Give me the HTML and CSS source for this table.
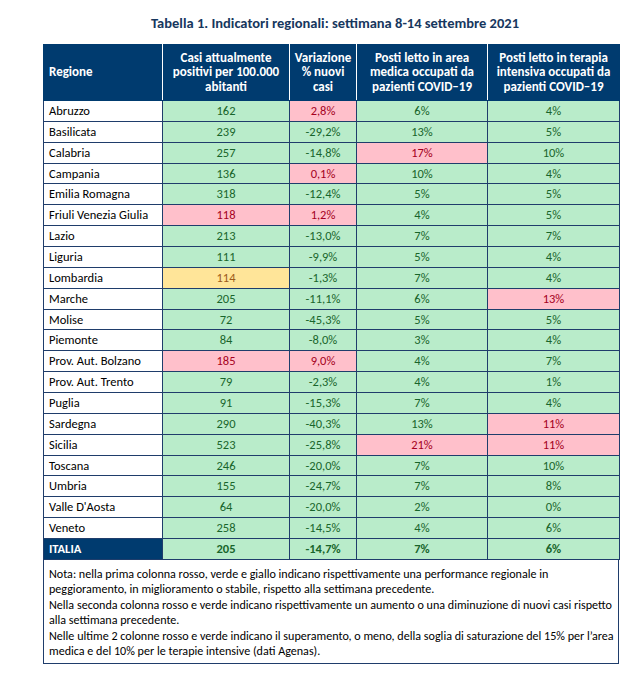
FILE: index.html
```html
<!DOCTYPE html>
<html lang="it">
<head>
<meta charset="utf-8">
<title>Tabella 1. Indicatori regionali</title>
<link rel="stylesheet" href="styles.css">
</head>
<body>
<div class="page">
  <h1 class="title">Tabella 1. Indicatori regionali: settimana 8-14 settembre 2021</h1>
  <table class="grid">
    <colgroup>
      <col class="c-reg"><col class="c-casi"><col class="c-var"><col class="c-med"><col class="c-int">
    </colgroup>
    <thead>
      <tr>
        <th class="h-reg">Regione</th>
        <th>Casi attualmente positivi per 100.000 abitanti</th>
        <th>Variazione % nuovi casi</th>
        <th>Posti letto in area medica occupati da pazienti COVID–19</th>
        <th>Posti letto in terapia intensiva occupati da pazienti COVID–19</th>
      </tr>
    </thead>
    <tbody>
      <tr><td class="reg">Abruzzo</td><td class="g">162</td><td class="r">2,8%</td><td class="g">6%</td><td class="g">4%</td></tr>
      <tr><td class="reg">Basilicata</td><td class="g">239</td><td class="g">-29,2%</td><td class="g">13%</td><td class="g">5%</td></tr>
      <tr><td class="reg">Calabria</td><td class="g">257</td><td class="g">-14,8%</td><td class="r">17%</td><td class="g">10%</td></tr>
      <tr><td class="reg">Campania</td><td class="g">136</td><td class="r">0,1%</td><td class="g">10%</td><td class="g">4%</td></tr>
      <tr><td class="reg">Emilia Romagna</td><td class="g">318</td><td class="g">-12,4%</td><td class="g">5%</td><td class="g">5%</td></tr>
      <tr><td class="reg">Friuli Venezia Giulia</td><td class="r">118</td><td class="r">1,2%</td><td class="g">4%</td><td class="g">5%</td></tr>
      <tr><td class="reg">Lazio</td><td class="g">213</td><td class="g">-13,0%</td><td class="g">7%</td><td class="g">7%</td></tr>
      <tr><td class="reg">Liguria</td><td class="g">111</td><td class="g">-9,9%</td><td class="g">5%</td><td class="g">4%</td></tr>
      <tr><td class="reg">Lombardia</td><td class="y">114</td><td class="g">-1,3%</td><td class="g">7%</td><td class="g">4%</td></tr>
      <tr><td class="reg">Marche</td><td class="g">205</td><td class="g">-11,1%</td><td class="g">6%</td><td class="r">13%</td></tr>
      <tr><td class="reg">Molise</td><td class="g">72</td><td class="g">-45,3%</td><td class="g">5%</td><td class="g">5%</td></tr>
      <tr><td class="reg">Piemonte</td><td class="g">84</td><td class="g">-8,0%</td><td class="g">3%</td><td class="g">4%</td></tr>
      <tr><td class="reg">Prov. Aut. Bolzano</td><td class="r">185</td><td class="r">9,0%</td><td class="g">4%</td><td class="g">7%</td></tr>
      <tr><td class="reg">Prov. Aut. Trento</td><td class="g">79</td><td class="g">-2,3%</td><td class="g">4%</td><td class="g">1%</td></tr>
      <tr><td class="reg">Puglia</td><td class="g">91</td><td class="g">-15,3%</td><td class="g">7%</td><td class="g">4%</td></tr>
      <tr><td class="reg">Sardegna</td><td class="g">290</td><td class="g">-40,3%</td><td class="g">13%</td><td class="r">11%</td></tr>
      <tr><td class="reg">Sicilia</td><td class="g">523</td><td class="g">-25,8%</td><td class="r">21%</td><td class="r">11%</td></tr>
      <tr><td class="reg">Toscana</td><td class="g">246</td><td class="g">-20,0%</td><td class="g">7%</td><td class="g">10%</td></tr>
      <tr><td class="reg">Umbria</td><td class="g">155</td><td class="g">-24,7%</td><td class="g">7%</td><td class="g">8%</td></tr>
      <tr><td class="reg">Valle D'Aosta</td><td class="g">64</td><td class="g">-20,0%</td><td class="g">2%</td><td class="g">0%</td></tr>
      <tr><td class="reg">Veneto</td><td class="g">258</td><td class="g">-14,5%</td><td class="g">4%</td><td class="g">6%</td></tr>
      <tr class="total"><td class="reg-total">ITALIA</td><td class="g">205</td><td class="g">-14,7%</td><td class="g">7%</td><td class="g">6%</td></tr>
    </tbody>
  </table>
  <div class="note">
    <p>Nota: nella prima colonna rosso, verde e giallo indicano rispettivamente una performance regionale in peggioramento, in miglioramento o stabile, rispetto alla settimana precedente.</p>
    <p>Nella seconda colonna rosso e verde indicano rispettivamente un aumento o una diminuzione di nuovi casi rispetto alla settimana precedente.</p>
    <p>Nelle ultime 2 colonne rosso e verde indicano il superamento, o meno, della soglia di saturazione del 15% per l’area medica e del 10% per le terapie intensive (dati Agenas).</p>
  </div>
</div>
</body>
</html>
```

FILE: styles.css
```css
html, body {
  margin: 0;
  padding: 0;
  background: #ffffff;
}

.page {
  width: 576px;
  margin-left: 43px;
  font-family: "Carlito", "Lato", "Noto Sans", sans-serif;
  color: #000;
}

.title {
  margin: 0;
  padding: 15px 0 0 8px;
  height: 30px;
  box-sizing: border-box;
  text-align: center;
  font-size: 14.5px;
  line-height: 16px;
  font-weight: 700;
  color: #17375e;
}

.grid {
  margin-top: 14px;
  width: 576px;
  border-collapse: collapse;
  table-layout: fixed;
  font-size: 12.5px;
}

.c-reg { width: 119px; }
.c-casi { width: 127px; }
.c-var { width: 67px; }
.c-med { width: 131px; }
.c-int { width: 132px; }

.grid th {
  background: #003b6f;
  color: #fff;
  font-weight: 700;
  font-size: 13px;
  line-height: 14.5px;
  height: 55px;
  padding: 0 2px;
  text-align: center;
  vertical-align: middle;
  border: 1px solid #003b6f;
  border-left: 1px solid #ffffff;
  border-right: 1px solid #ffffff;
}

.grid th.h-reg {
  text-align: left;
  padding-left: 5px;
  border-left-color: #003b6f;
}

.grid th:last-child {
  border-right-color: #003b6f;
}

.grid td {
  height: 20.86px;
  padding: 0 4px;
  border: 1px solid #1f3d6b;
  text-align: center;
  vertical-align: middle;
  line-height: 14px;
  white-space: nowrap;
  box-sizing: border-box;
}

.grid td.reg {
  text-align: left;
  background: #ffffff;
  color: #000;
  padding-left: 5px;
}

.grid td.reg-total {
  text-align: left;
  background: #003b6f;
  color: #fff;
  font-weight: 700;
  padding-left: 5px;
}

.grid td.g {
  background: #b9ecca;
  color: #18652b;
}

.grid td.r {
  background: #ffc0cb;
  color: #a50021;
}

.grid td.y {
  background: #ffe599;
  color: #9c5a1a;
}

.total td.g {
  font-weight: 700;
}

.note {
  border: 1px solid #1f3d6b;
  border-top: none;
  padding: 6px 2px 4px 5px;
  font-size: 12.1px;
  line-height: 15.5px;
  color: #000;
}

.note p {
  margin: 0;
}
```
